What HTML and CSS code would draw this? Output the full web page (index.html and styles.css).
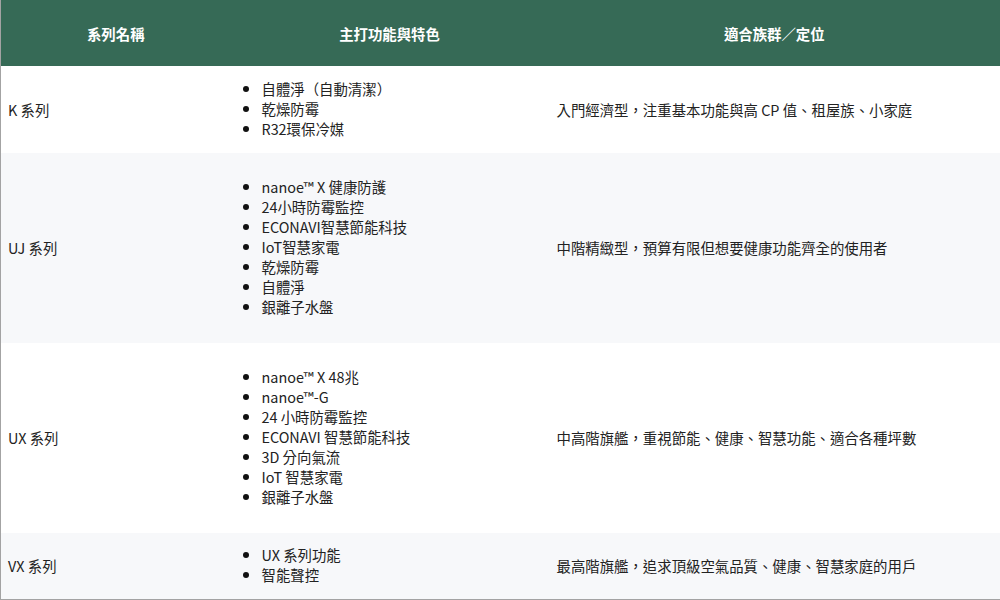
FILE: index.html
```html
<!DOCTYPE html>
<html lang="zh-Hant">
<head>
<meta charset="utf-8">
<link rel="stylesheet" href="styles.css">
</head>
<body>
<table class="spec">
  <colgroup>
    <col class="c1"><col class="c2"><col class="c3">
  </colgroup>
  <thead>
    <tr><th>系列名稱</th><th>主打功能與特色</th><th>適合族群／定位</th></tr>
  </thead>
  <tbody>
    <tr class="short">
      <td>K 系列</td>
      <td><ul><li>自體淨（自動清潔）</li><li>乾燥防霉</li><li>R32環保冷媒</li></ul></td>
      <td>入門經濟型，注重基本功能與高 CP 值、租屋族、小家庭</td>
    </tr>
    <tr class="alt tall">
      <td>UJ 系列</td>
      <td><ul><li>nanoe™ X 健康防護</li><li>24小時防霉監控</li><li>ECONAVI智慧節能科技</li><li>IoT智慧家電</li><li>乾燥防霉</li><li>自體淨</li><li>銀離子水盤</li></ul></td>
      <td>中階精緻型，預算有限但想要健康功能齊全的使用者</td>
    </tr>
    <tr class="tall">
      <td>UX 系列</td>
      <td><ul><li>nanoe™ X 48兆</li><li>nanoe™-G</li><li>24 小時防霉監控</li><li>ECONAVI 智慧節能科技</li><li>3D 分向氣流</li><li>IoT 智慧家電</li><li>銀離子水盤</li></ul></td>
      <td>中高階旗艦，重視節能、健康、智慧功能、適合各種坪數</td>
    </tr>
    <tr class="alt last">
      <td>VX 系列</td>
      <td><ul><li>UX 系列功能</li><li>智能聲控</li></ul></td>
      <td>最高階旗艦，追求頂級空氣品質、健康、智慧家庭的用戶</td>
    </tr>
  </tbody>
</table>
</body>
</html>
```

FILE: styles.css
```css
html, body {
  margin: 0;
  padding: 0;
  background: #ffffff;
}
body {
  font-family: "Noto Sans CJK TC", "Noto Sans", sans-serif;
  font-size: 14.4px;
  color: #222222;
}
.spec {
  width: 1000px;
  height: 600px;
  border-collapse: collapse;
  table-layout: fixed;
  border: 1px solid #a3a3a3;
  border-top: none;
}
.c1 { width: 230px; }
.c2 { width: 318px; }
.c3 { width: 452px; }
.spec thead th {
  height: 66px;
  padding: 0 8px;
  background: #366a56;
  color: #ffffff;
  font-weight: 700;
  font-size: 14.4px;
  text-align: center;
  vertical-align: middle;
  box-sizing: border-box;
}
.spec td {
  padding: 0 8px;
  vertical-align: middle;
  line-height: 20px;
}
.spec td:first-child { padding-left: 7px; }
.alt td { background: #f7f8fa; }
.spec ul {
  margin: -2px 0 0;
  padding-left: 4px;
  list-style: none;
}
.spec li {
  display: flex;
  align-items: center;
  gap: 13px;
  line-height: 20px;
}
.spec li::before {
  content: "";
  flex: none;
  width: 6px;
  height: 6px;
  border-radius: 50%;
  background: #111111;
}
.short td { height: 87px; }
.tall td { height: 190px; }
.last td { height: 66px; }
```
